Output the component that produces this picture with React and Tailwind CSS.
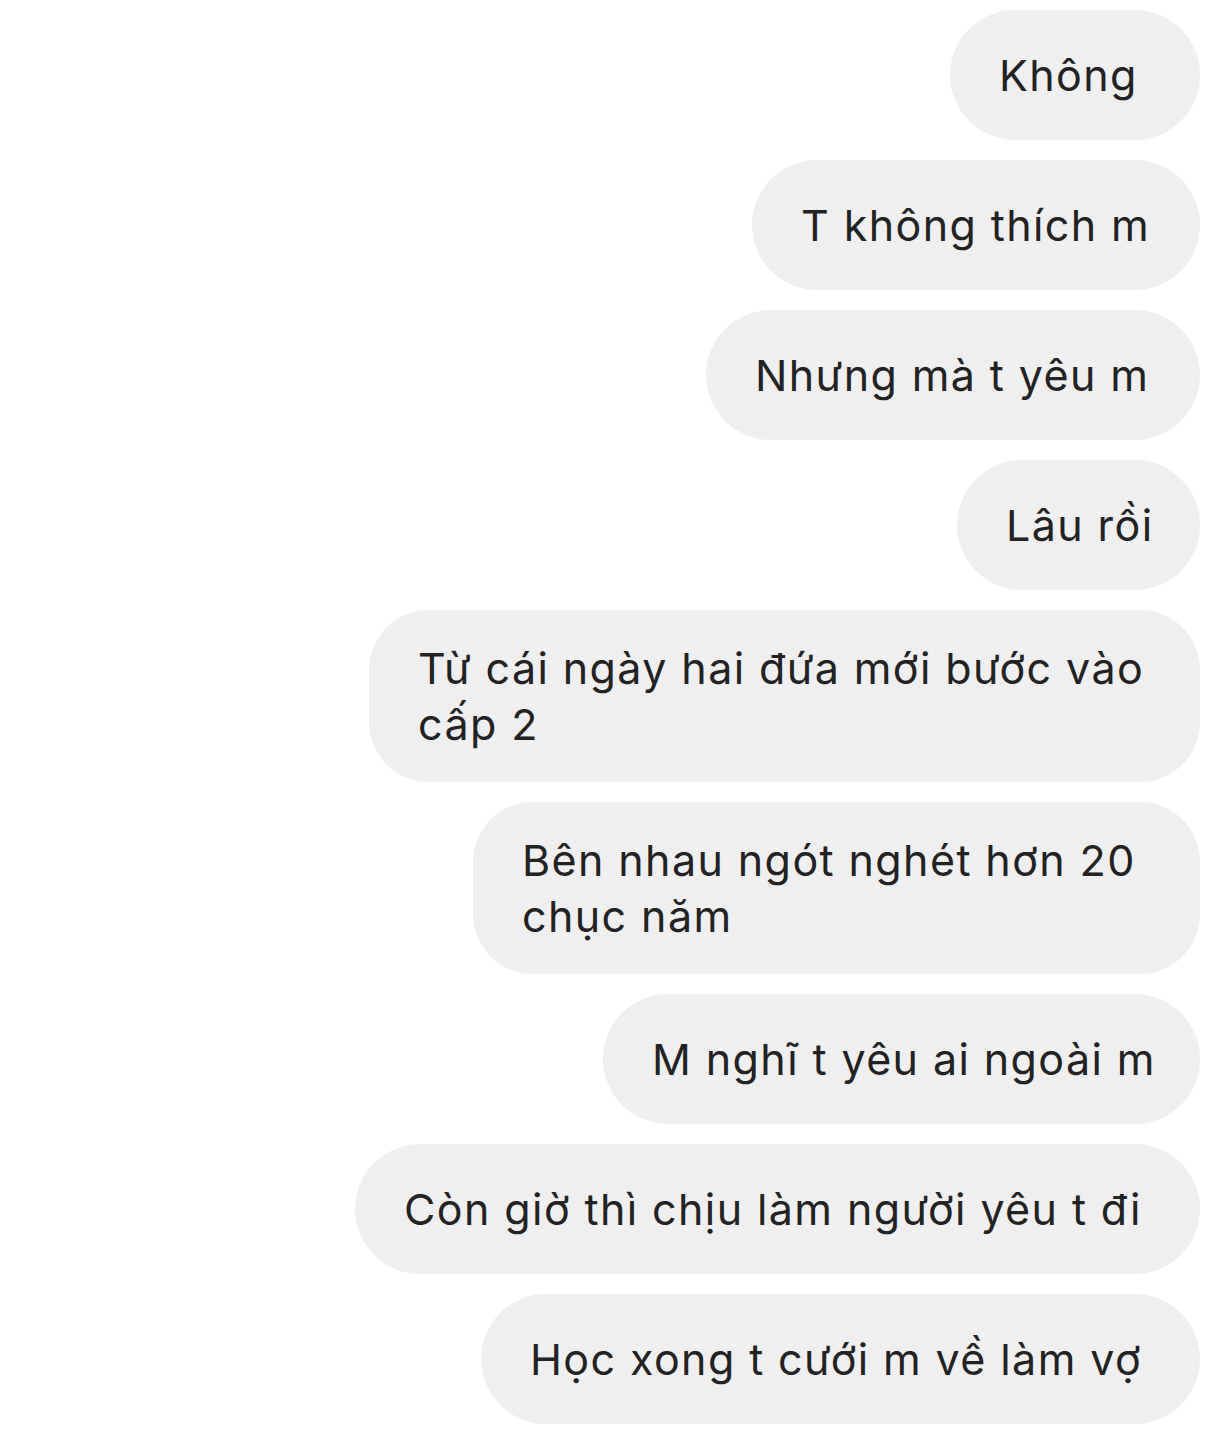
export default function App() {
  const msgs = [
    { w: "w-[250px]", lines: ["Không"] },
    { w: "w-[448px]", lines: ["T không thích m"] },
    { w: "w-[494px]", lines: ["Nhưng mà t yêu m"] },
    { w: "w-[243px]", lines: ["Lâu rồi"] },
    { w: "w-[831px]", lines: ["Từ cái ngày hai đứa mới bước vào", "cấp 2"] },
    { w: "w-[727px]", lines: ["Bên nhau ngót nghét hơn 20", "chục năm"] },
    { w: "w-[597px]", lines: ["M nghĩ t yêu ai ngoài m"] },
    { w: "w-[845px]", lines: ["Còn giờ thì chịu làm người yêu t đi"] },
    { w: "w-[719px]", lines: ["Học xong t cưới m về làm vợ"] },
  ];
  return (
    <div
      className="w-[1220px] h-[1439px] bg-white flex flex-col items-end gap-[20px] pt-[10px] pr-[20px] overflow-hidden"
      style={{ fontFamily: "Inter, 'Noto Sans', sans-serif" }}
    >
      {msgs.map((m, i) => (
        <div
          key={i}
          className={
            m.w +
            " bg-[#efefef] text-[#222222] text-[43px] tracking-[1.4px] leading-[56px] pl-[49px] flex items-center whitespace-nowrap " +
            (m.lines.length > 1 ? "h-[172px] rounded-[60px]" : "h-[130px] rounded-full")
          }
        >
          <div>
            {m.lines.map((l, j) => (
              <div key={j}>{l}</div>
            ))}
          </div>
        </div>
      ))}
    </div>
  );
}
